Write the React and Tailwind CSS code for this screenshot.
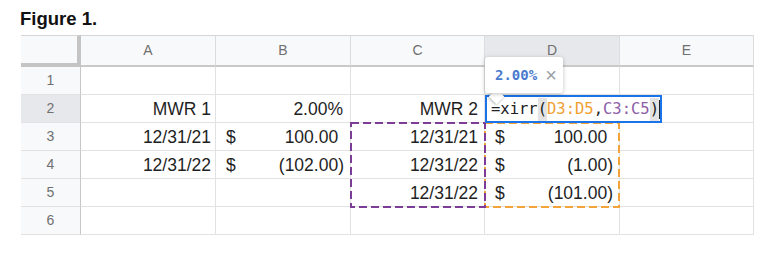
import React from 'react';

const cols = ['A', 'B', 'C', 'D', 'E'];

const rows = [
  { n: 1, A: '', B: null, C: '', D: null },
  { n: 2, A: 'MWR 1', B: { pct: '2.00%' }, C: 'MWR 2', D: null },
  { n: 3, A: '12/31/21', B: { amt: '100.00', pos: true }, C: '12/31/21', D: { amt: '100.00', pos: true } },
  { n: 4, A: '12/31/22', B: { amt: '(102.00)' }, C: '12/31/22', D: { amt: '(1.00)' } },
  { n: 5, A: '', B: null, C: '12/31/22', D: { amt: '(101.00)' } },
  { n: 6, A: '', B: null, C: '', D: null },
];

const cell = 'h-[28px] border-r border-b border-[#e2e2e2] flex items-center text-[17.5px] text-[#1f1f1f] pt-[2px]';

const Money = ({ v }) => {
  if (!v) return <div className={cell} />;
  if (v.pct) return <div className={`${cell} justify-end pr-[7px]`}>{v.pct}</div>;
  return (
    <div className={`${cell} justify-between pl-[10px] pr-[6px]`}>
      <span>$</span>
      <span>
        {v.amt}
        {v.pos && <span className="invisible">)</span>}
      </span>
    </div>
  );
};

const Text = ({ v, pr }) => (
  <div className={`${cell} justify-end ${pr}`}>{v}</div>
);

// dashed range outline drawn over the cells
const Range = ({ color, className }) => (
  <svg className={`absolute pointer-events-none ${className}`} width="136" height="86" viewBox="0 0 136 86">
    <rect x="1" y="1" width="134" height="84" fill="none" stroke={color} strokeWidth="2" strokeDasharray="8 4" />
  </svg>
);

export default function App() {
  return (
    <div className="w-[768px] h-[256px] bg-white overflow-hidden font-['Liberation_Sans',Arial,sans-serif]">
      <div className="pl-[20px] pt-[8px] text-[18.5px] leading-[22px] font-bold text-[#111]">Figure 1.</div>

      <div className="relative ml-[21px] mt-[5px] w-[733px]">
        <div className="grid grid-cols-[60px_135px_135px_134px_135px_134px]">
          {/* header row */}
          <div className="h-[32px] bg-[#f8f9fa] border-t border-t-[#d6d6d6] border-r-4 border-b-4 border-r-[#c4c4c4] border-b-[#c4c4c4]" />
          {cols.map((c) => (
            <div
              key={c}
              className={`h-[32px] flex items-center justify-center text-[14px] text-[#707070] border-t border-t-[#d6d6d6] border-r border-r-[#dcdcdc] border-b-2 border-b-[#c9c9c9] ${c === 'D' ? 'bg-[#e6e8eb]' : 'bg-[#f8f9fa]'}`}
            >
              {c}
            </div>
          ))}

          {rows.map((r) => (
            <React.Fragment key={r.n}>
              <div
                className={`h-[28px] flex items-center justify-center text-[14px] text-[#707070] border-r border-r-[#c7c7c7] border-b border-b-[#e2e2e2] ${r.n === 2 ? 'bg-[#e6e8eb]' : 'bg-[#f8f9fa]'}`}
              >
                {r.n}
              </div>
              <Text v={r.A} pr="pr-[4px]" />
              <Money v={r.B} />
              <Text v={r.C} pr="pr-[6px]" />
              <Money v={r.D} />
              <div className={cell} />
            </React.Fragment>
          ))}
        </div>

        <Range color="#f2a33a" className="left-[463px] top-[87px]" />
        <Range color="#7d3c98" className="left-[329px] top-[87px]" />

        {/* in-cell formula editor on D2 */}
        <div className="absolute left-[464px] top-[60px] w-[177px] h-[28px] border-2 border-[#1a73e8] bg-white flex items-center pl-[4px] pt-[1px] font-['DejaVu_Sans_Mono',monospace] text-[15.5px] text-[#202124] whitespace-nowrap">
          <span>=xirr</span>
          <span className="bg-[#e3e3e3]">(</span>
          <span className="text-[#f0a030]">D3:D5</span>
          <span>,</span>
          <span className="text-[#8d5ea8]">C3:C5</span>
          <span className="bg-[#e3e3e3]">)</span>
          <span className="w-[2px] h-[19px] bg-[#202124]" />
        </div>

        {/* result tooltip */}
        <div className="absolute left-[470px] top-[56px] w-[11px] h-[11px] bg-white rotate-45 shadow-[0_1px_3px_rgba(0,0,0,0.3)]" />
        <div className="absolute left-[464px] top-[22px] w-[78px] h-[36px] bg-white rounded-[3px] shadow-[0_1px_4px_rgba(0,0,0,0.25)] flex items-center pl-[10px] gap-[8px]">
          <span className="font-['DejaVu_Sans_Mono',monospace] text-[14px] font-semibold text-[#4a7bd0]">2.00%</span>
          <span className="text-[20px] leading-none text-[#9aa0a6]">×</span>
        </div>
      </div>
    </div>
  );
}
